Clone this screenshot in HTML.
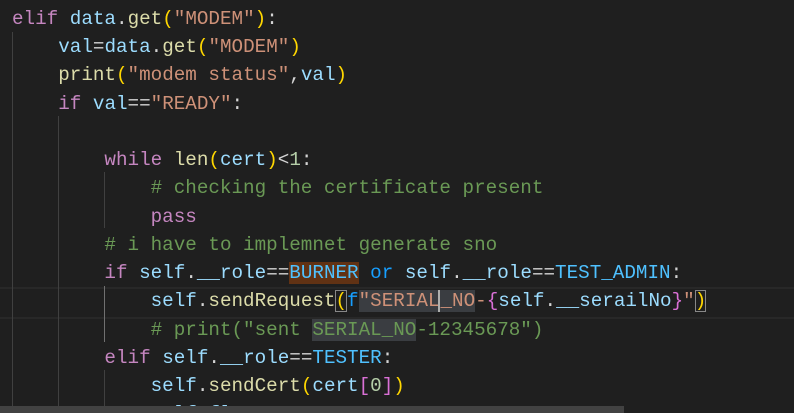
<!DOCTYPE html>
<html><head><style>
html,body{margin:0;padding:0;background:#1f1f1f;width:794px;height:413px;overflow:hidden}
#w{position:relative;width:794px;height:413px;overflow:hidden}
#c{position:absolute;left:12px;top:5px;font-family:"Liberation Mono",monospace;font-size:19.25px;line-height:28.23px;color:#d4d4d4;white-space:pre}
.k{color:#c586c0}.v{color:#9cdcfe}.f{color:#dcdcaa}.s{color:#ce9178}.c{color:#6a9955}.y{color:#ffd700}.p{color:#da70d6}.b{color:#179fff}.n{color:#4fc1ff}.num{color:#b5cea8}
.g{position:absolute;width:1px;background:#404040}
.hl{background:#613214}.sel{background:#3a3d41}
.bx{outline:1px solid #888;outline-offset:-1px}
</style></head><body><div id="w">
<div style="position:absolute;left:0;right:0;top:287px;height:28px;border-top:2px solid #282828;border-bottom:2px solid #282828"></div>
<div class="g" style="left:12px;top:32px;height:381px"></div>
<div class="g" style="left:58px;top:116px;height:297px"></div>
<div class="g" style="left:104px;top:172px;height:56px"></div>
<div class="g" style="left:104px;top:286px;height:56px;background:#707070"></div>
<div class="g" style="left:104px;top:370px;height:43px"></div>
<div id="c"><span class="k">elif</span> <span class="v">data</span>.<span class="f">get</span><span class="y">(</span><span class="s">"MODEM"</span><span class="y">)</span>:
    <span class="v">val</span>=<span class="v">data</span>.<span class="f">get</span><span class="y">(</span><span class="s">"MODEM"</span><span class="y">)</span>
    <span class="f">print</span><span class="y">(</span><span class="s">"modem status"</span>,<span class="v">val</span><span class="y">)</span>
    <span class="k">if</span> <span class="v">val</span>==<span class="s">"READY"</span>:

        <span class="k">while</span> <span class="f">len</span><span class="y">(</span><span class="v">cert</span><span class="y">)</span>&lt;<span class="num">1</span>:
            <span class="c"># checking the certificate present</span>
            <span class="k">pass</span>
        <span class="c"># i have to implemnet generate sno</span>
        <span class="k">if</span> <span class="v">self</span>.<span class="v">__role</span>==<span class="n hl">BURNER</span> <span class="b">or</span> <span class="v">self</span>.<span class="v">__role</span>==<span class="n">TEST_ADMIN</span>:
            <span class="v">self</span>.<span class="f">sendRequest</span><span class="y bx">(</span><span class="b">f</span><span class="s sel">"SERIAL<span style="border-left:2px solid #aeafad;margin-left:-1px">_</span>NO</span><span class="s">-</span><span class="p">{</span><span class="v">self</span>.<span class="v">__serailNo</span><span class="p">}</span><span class="s">"</span><span class="y bx">)</span>
            <span class="c"># print("sent <span class="sel">SERIAL_NO</span>-12345678")</span>
        <span class="k">elif</span> <span class="v">self</span>.<span class="v">__role</span>==<span class="n">TESTER</span>:
            <span class="v">self</span>.<span class="f">sendCert</span><span class="y">(</span><span class="v">cert</span><span class="p">[</span><span class="num">0</span><span class="p">]</span><span class="y">)</span>
            <span class="v">self</span>.<span class="v">flagCert</span>=<span class="num">0</span></div>
<div style="position:absolute;left:0;top:406px;width:624px;height:7px;background:#424242"></div>
</div></body></html>
